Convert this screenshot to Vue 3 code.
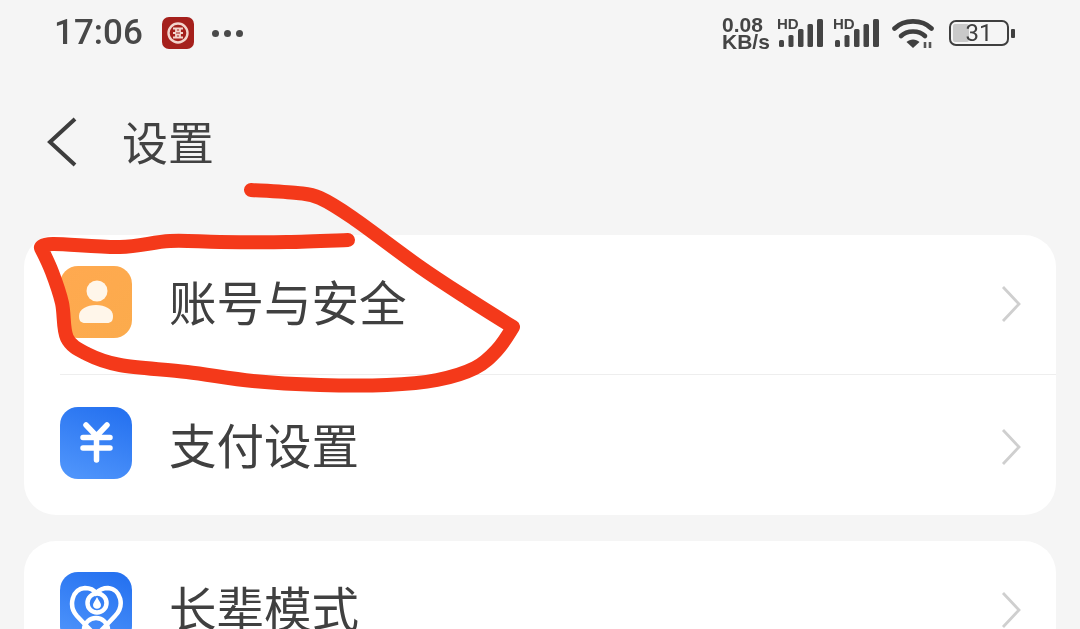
<script setup>
const pts = [[251,190],[297,193],[320,198],[353,218],[420,267],[470,300],[513,327],[497,350],[475,368],[437,380],[387,385],[320,385],[253,381],[187,372],[120,365],[87,354],[67,338],[62,303],[52,272],[41,248],[53,244],[120,247],[170,241],[220,242],[287,242],[348,240]]
function smooth(p) {
  let d = `M${p[0][0]} ${p[0][1]}`
  const corners = [6, 19]
  for (let i = 0; i < p.length - 1; i++) {
    const a = p[Math.max(i - 1, 0)], b = p[i], c = p[i + 1], e = p[Math.min(i + 2, p.length - 1)]
    const k1 = corners.includes(i) ? 0 : 1 / 6
    const k2 = corners.includes(i + 1) ? 0 : 1 / 6
    d += ` C${b[0] + (c[0] - a[0]) * k1} ${b[1] + (c[1] - a[1]) * k1} ${c[0] - (e[0] - b[0]) * k2} ${c[1] - (e[1] - b[1]) * k2} ${c[0]} ${c[1]}`
  }
  return d
}
const scribble = smooth(pts)
const bars = [[0, 21, 5], [9.5, 16, 5], [19, 10, 5.5], [28.5, 5, 5.5], [38, 0, 6]]
</script>

<template>
  <div class="page">
    <div class="status">
      <div class="status-left">
        <span class="time">17:06</span>
        <svg class="bank" viewBox="0 0 32 32">
          <rect width="32" height="32" rx="7" fill="#a5201c" />
          <circle cx="16" cy="16" r="9.500" fill="none" stroke="#f3d5cd" stroke-width="2.400" />
          <path d="M11 11.500h10M11 20.500h10M14 11.500v3h4v-3M14 20.500v-3h4v3M11 16h3M18 16h3" fill="none" stroke="#f3d5cd" stroke-width="1.800" />
        </svg>
        <span class="dots"><i></i><i></i><i></i></span>
      </div>
      <div class="status-right">
        <div class="speed"><span>0.08</span><span>KB/s</span></div>
        <div v-for="n in 2" :key="n" class="signal">
          <span class="hd">HD</span>
          <svg class="bar-svg" viewBox="0 0 44 30" width="44" height="30">
            <rect v-for="b in bars" :key="b[0]" :x="b[0]" :y="b[1]" :width="b[2]" :height="28 - b[1]" rx="1.500" fill="#444" />
          </svg>
        </div>
        <svg class="wifi" viewBox="0 0 42 30" width="42" height="30">
          <g fill="none" stroke="#3f3f3f" stroke-width="4.600" stroke-linecap="round">
            <path d="M2.500 10.500C12 1 30 1 39.500 10.500" />
            <path d="M9 18C15 12 27 12 33 18" />
          </g>
          <path d="M14.500 24C18 20.500 24 20.500 27.500 24L21 30Z" fill="#3f3f3f" />
          <path d="M33 30v-6M38 30v-6" stroke="#555" stroke-width="2.600" />
        </svg>
        <div class="battery-wrap">
          <div class="battery"><span class="level"></span><span class="num">31</span></div>
          <span class="nub"></span>
        </div>
      </div>
    </div>

    <header class="head">
      <svg class="back" viewBox="0 0 32 50" width="32" height="50">
        <path d="M29 2L4 25L29 48" fill="none" stroke="#3d3d3d" stroke-width="4" />
      </svg>
      <h1 class="title">设置</h1>
    </header>

    <section class="card">
      <div class="row">
        <svg class="icon" viewBox="0 0 72 72">
          <defs>
            <linearGradient id="orange" x1="0" y1="0" x2="1" y2="1"><stop offset="0" stop-color="#ffa950" /><stop offset="1" stop-color="#fbab4c" /></linearGradient>
            <linearGradient id="blue" x1="0.7" y1="0" x2="0.3" y2="1"><stop offset="0" stop-color="#2672f0" /><stop offset="1" stop-color="#4e94fb" /></linearGradient>
          </defs>
          <rect width="72" height="72" rx="18" fill="url(#orange)" />
          <circle cx="37" cy="25" r="10.500" fill="#fff6ea" />
          <path d="M19 50C19 43 27 39 36 39S53 43 53 50C53 55 51 57 47 57H25C21 57 19 55 19 50Z" fill="#fff6ea" />
        </svg>
        <span class="label">账号与安全</span>
        <svg class="chev" viewBox="0 0 20 36" width="20" height="36"><path d="M2 1L18 18L2 35" fill="none" stroke="#cfcfcf" stroke-width="2.800" /></svg>
      </div>
      <div class="divider"></div>
      <div class="row second">
        <svg class="icon" viewBox="0 0 72 72">
          <rect width="72" height="72" rx="18" fill="url(#blue)" />
          <path d="M26 18L36.500 29L47 18M23 30.500H50M23 41H50M36.500 29V53" fill="none" stroke="#fff" stroke-width="5.500" stroke-linecap="round" stroke-linejoin="round" />
        </svg>
        <span class="label">支付设置</span>
        <svg class="chev" viewBox="0 0 20 36" width="20" height="36"><path d="M2 1L18 18L2 35" fill="none" stroke="#cfcfcf" stroke-width="2.800" /></svg>
      </div>
    </section>

    <section class="card">
      <div class="row">
        <svg class="icon" viewBox="0 0 72 72">
          <rect width="72" height="72" rx="18" fill="url(#blue)" />
          <g fill="none" stroke="#fff" stroke-width="4.500">
            <path d="M36 64L17 44C8 34 12 17 25 16C30 16 34 18 36 21C39 18 43 16 48 16C61 17 65 34 55 44Z" />
            <circle cx="37" cy="31" r="9.500" />
            <circle cx="36" cy="58" r="12" />
          </g>
          <path d="M37 25C39 29 41 31 41 33C41 38 33 38 33 33C33 31 35 29 37 25Z" fill="#fff" />
        </svg>
        <span class="label">长辈模式</span>
        <svg class="chev" viewBox="0 0 20 36" width="20" height="36"><path d="M2 1L18 18L2 35" fill="none" stroke="#cfcfcf" stroke-width="2.800" /></svg>
      </div>
    </section>

    <svg class="ink" viewBox="0 0 1080 629" width="1080" height="629">
      <path :d="scribble" fill="none" stroke="#f4391a" stroke-width="14" stroke-linecap="round" stroke-linejoin="round" />
    </svg>
  </div>
</template>

<style>
html, body { margin: 0; background: #f5f5f5; }
</style>

<style scoped>
.page {
  position: relative;
  width: 1080px;
  height: 629px;
  overflow: hidden;
  background: #f5f5f5;
  color: #3d3d3d;
  font-family: "Noto Sans CJK SC", "Noto Sans", sans-serif;
  filter: blur(0.5px);
}
.status {
  height: 66px;
  box-sizing: border-box;
  padding: 0 65px 0 54px;
  display: flex;
  justify-content: space-between;
  align-items: center;
}
.status-left, .status-right { display: flex; align-items: center; }
.time {
  font-family: Roboto, "Noto Sans", sans-serif;
  font-weight: 500;
  font-size: 35px;
  line-height: 40px;
  color: #484848;
  width: 108px;
}
.bank { width: 32px; height: 32px; }
.dots { display: flex; gap: 5px; margin-left: 18px; }
.dots i { width: 7px; height: 7px; border-radius: 50%; background: #4a4a4a; }
.speed {
  display: flex;
  flex-direction: column;
  font-family: "Liberation Sans", sans-serif;
  font-weight: 700;
  font-size: 21px;
  line-height: 17px;
  color: #444;
  width: 55px;
}
.signal { position: relative; width: 56px; height: 34px; display: flex; align-items: flex-end; }
.hd {
  position: absolute;
  left: 0;
  top: 1px;
  font-family: "Liberation Sans", sans-serif;
  font-weight: 700;
  font-size: 15px;
  line-height: 14px;
  color: #444;
}
.bar-svg { margin: 0 0 1px 2px; }
.wifi { margin-left: 3px; }
.battery-wrap { display: flex; align-items: center; margin-left: 15px; gap: 2px; }
.battery {
  position: relative;
  box-sizing: border-box;
  width: 60px;
  height: 26px;
  border: 2.500px solid #3f3f3f;
  border-radius: 7px;
  display: flex;
  align-items: center;
  justify-content: center;
}
.level { position: absolute; left: 2px; top: 2px; bottom: 2px; width: 16px; background: #c9c9c9; border-radius: 2px; }
.num { position: relative; font-family: Roboto, sans-serif; font-size: 24px; line-height: 22px; color: #3f3f3f; }
.nub { width: 4px; height: 9px; background: #3f3f3f; border-radius: 1px; }
.head {
  height: 152px;
  margin-bottom: 17px;
  padding-left: 46px;
  display: flex;
  align-items: center;
  gap: 44px;
}
.back { display: block; }
.title { margin: -5px 0 0; font-size: 46px; line-height: 60px; font-weight: 400; color: #424242; }
.card {
  margin: 0 24px 26px;
  background: #fff;
  border-radius: 32px;
}
.row {
  height: 140px;
  box-sizing: border-box;
  padding: 31px 35px 37px 36px;
  display: flex;
  align-items: center;
}
.row.second { padding-top: 32px; padding-bottom: 36px; }
.icon { width: 72px; height: 72px; flex: none; }
.label { margin: -2px 0 0 37px; font-size: 47.500px; line-height: 72px; color: #404040; flex: 1; }
.chev { flex: none; margin-top: 3px; }
.second .chev { margin-top: 8px; }
.second .label { margin-top: 2px; }
.divider { height: 1px; margin: -1px 0 0 36px; background: #eeeeee; }
.ink { position: absolute; left: 0; top: 0; }
</style>
